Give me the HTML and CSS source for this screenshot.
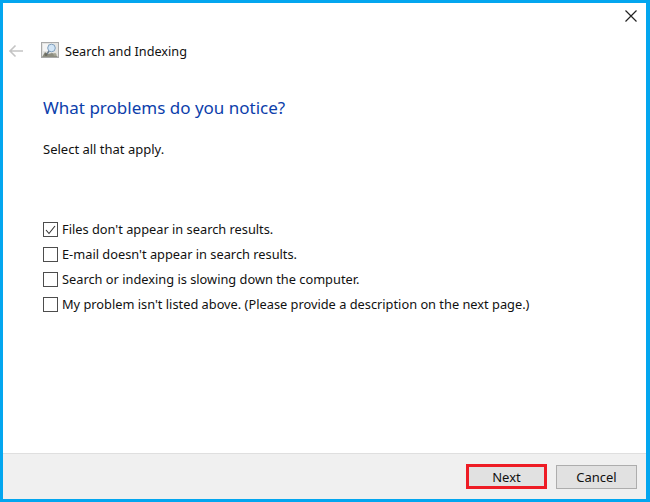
FILE: index.html
```html
<!DOCTYPE html>
<html lang="en">
<head>
<meta charset="utf-8">
<title>Search and Indexing</title>
<link rel="stylesheet" href="styles.css">
</head>
<body>
<div class="window">
  <div class="titlebar">
    <svg class="close" width="14" height="14" viewBox="0 0 14 14"><path d="M1.5 1.5 12.5 12.5M12.5 1.5 1.5 12.5" stroke="#222" stroke-width="1.2" fill="none"/></svg>
  </div>
  <div class="nav">
    <svg class="back" width="16" height="14" viewBox="0 0 16 14"><path d="M15 7H2M7.5 1.5 2 7l5.5 5.5" stroke="#c4c4c4" stroke-width="1.6" fill="none"/></svg>
    <svg class="appicon" width="18" height="16" viewBox="0 0 18 16">
      <rect x="0.5" y="0.5" width="17" height="15" fill="#e4e4e2" stroke="#a9a9a9"/>
      <rect x="2" y="2" width="5" height="7" fill="#f5f5f5"/>
      <path d="M1 15 4 10l3 2 4-1 3 1 3 3z" fill="#8d8d80"/>
      <circle cx="5" cy="12.5" r="1.5" fill="#6b6b60"/>
      <circle cx="14" cy="12.5" r="1.5" fill="#a5a595"/>
      <circle cx="10.5" cy="6" r="3.8" fill="#d2e5f6" stroke="#7f9fbd"/>
      <path d="M8 9 6 12" stroke="#6f7f8f" stroke-width="1.5"/>
    </svg>
    <span class="navtitle">Search and Indexing</span>
  </div>
  <main class="content">
    <h1 class="heading">What problems do you notice?</h1>
    <p class="hint">Select all that apply.</p>
    <ul class="options">
      <li class="option">
        <span class="box"><svg width="11" height="10" viewBox="0 0 11 10"><path d="M1 5 4 8.5 10 1" stroke="#333" stroke-width="1.1" fill="none"/></svg></span>
        <span class="label">Files don't appear in search results.</span>
      </li>
      <li class="option"><span class="box"></span><span class="label">E-mail doesn't appear in search results.</span></li>
      <li class="option"><span class="box"></span><span class="label">Search or indexing is slowing down the computer.</span></li>
      <li class="option"><span class="box"></span><span class="label">My problem isn't listed above. (Please provide a description on the next page.)</span></li>
    </ul>
  </main>
  <footer class="footer">
    <button class="btn btn-next">Next</button>
    <button class="btn">Cancel</button>
  </footer>
</div>
</body>
</html>
```
FILE: styles.css
```css
html, body { margin: 0; height: 100%; }
body { font-family: "Noto Sans", sans-serif; font-size: 12.8px; color: #111; background: #fff; }
.window { box-sizing: border-box; width: 650px; height: 502px; border: 3px solid #03a6ef; border-right-width: 4px; display: flex; flex-direction: column; background: #fff; }
.titlebar { height: 26px; display: flex; justify-content: flex-end; align-items: flex-start; padding: 6px 8px 0 0; box-sizing: border-box; }
.nav { height: 30px; display: flex; align-items: center; padding-left: 5px; margin-top: 7px; }
.back { margin-right: 17px; }
.appicon { margin-right: 6px; margin-top: -2px; }
.navtitle { font-size: 12.7px; }
.content { flex: 1; padding: 0 0 0 40px; }
.heading { margin: 30px 0 0; font-size: 17px; line-height: 24px; font-weight: 400; color: #0c3eab; }
.hint { margin: 20px 0 0; line-height: 18px; font-size: 13px; }
.options { list-style: none; margin: 63px 0 0; padding: 0; display: flex; flex-direction: column; gap: 8px; }
.option { display: flex; align-items: center; height: 17px; gap: 4px; }
.label { margin-top: -2px; }
.box { box-sizing: border-box; width: 15px; height: 15px; border: 1px solid #4d4d4d; display: flex; align-items: center; justify-content: center; background: #fff; }
.footer { height: 46px; box-sizing: border-box; background: #f0f0f0; border-top: 1px solid #dfdfdf; display: flex; justify-content: flex-end; align-items: center; gap: 9px; padding: 0 9px 0 0; }
.btn { box-sizing: border-box; width: 81px; height: 24px; background: #e1e1e1; border: 1px solid #adadad; font: inherit; font-size: 13px; color: #111; padding: 0; }
.btn-next { border: 3px solid #ee1c25; height: 25px; }
```
